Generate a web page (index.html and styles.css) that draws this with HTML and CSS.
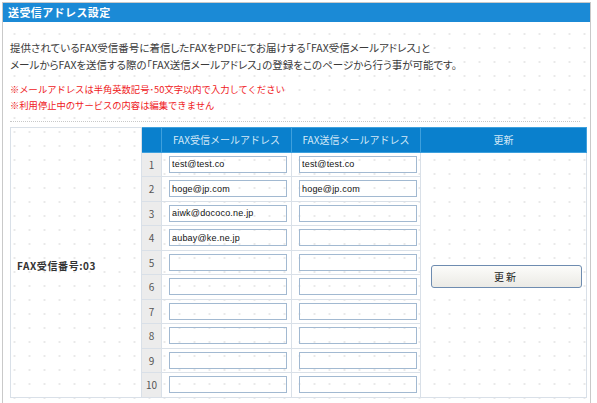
FILE: index.html
```html
<!DOCTYPE html>
<html lang="ja">
<head>
<meta charset="utf-8">
<title>送受信アドレス設定</title>
<link rel="stylesheet" href="styles.css">
</head>
<body>
<div class="panel">
  <h1 class="panel-title">送受信アドレス設定</h1>
  <div class="panel-body">
    <p class="lead">提供されているFAX受信番号に着信したFAXをPDFにてお届けする「FAX受信メールアドレス」と<br>メールからFAXを送信する際の「FAX送信メールアドレス」の登録をこのページから行う事が可能です。</p>
    <p class="notes">※メールアドレスは半角英数記号･50文字以内で入力してください<br>※利用停止中のサービスの内容は編集できません</p>
    <hr class="sep">
    <table class="addr">
      <colgroup>
        <col class="c-label"><col class="c-num"><col class="c-rx"><col class="c-tx"><col class="c-btn">
      </colgroup>
      <tbody>
        <tr class="head-row">
          <th class="label" rowspan="11">FAX受信番号:03</th>
          <th class="head"></th>
          <th class="head">FAX受信メールアドレス</th>
          <th class="head">FAX送信メールアドレス</th>
          <th class="head">更新</th>
        </tr>
        <tr><td class="num">1</td><td class="cell"><input class="field" value="test@test.co"></td><td class="cell"><input class="field" value="test@test.co"></td><td class="action" rowspan="10"><button class="btn">更新</button></td></tr>
        <tr><td class="num">2</td><td class="cell"><input class="field" value="hoge@jp.com"></td><td class="cell"><input class="field" value="hoge@jp.com"></td></tr>
        <tr><td class="num">3</td><td class="cell"><input class="field" value="aiwk@dococo.ne.jp"></td><td class="cell"><input class="field" value=""></td></tr>
        <tr><td class="num">4</td><td class="cell"><input class="field" value="aubay@ke.ne.jp"></td><td class="cell"><input class="field" value=""></td></tr>
        <tr><td class="num">5</td><td class="cell"><input class="field" value=""></td><td class="cell"><input class="field" value=""></td></tr>
        <tr><td class="num">6</td><td class="cell"><input class="field" value=""></td><td class="cell"><input class="field" value=""></td></tr>
        <tr><td class="num">7</td><td class="cell"><input class="field" value=""></td><td class="cell"><input class="field" value=""></td></tr>
        <tr><td class="num">8</td><td class="cell"><input class="field" value=""></td><td class="cell"><input class="field" value=""></td></tr>
        <tr><td class="num">9</td><td class="cell"><input class="field" value=""></td><td class="cell"><input class="field" value=""></td></tr>
        <tr><td class="num">10</td><td class="cell"><input class="field" value=""></td><td class="cell"><input class="field" value=""></td></tr>
      </tbody>
    </table>
  </div>
</div>
</body>
</html>
```
FILE: styles.css
```css
html, body {
  margin: 0;
  padding: 0;
  background: #fff;
}
body {
  font-family: "Noto Sans CJK JP", "Noto Sans", sans-serif;
  color: #333;
}
.panel {
  margin: 2px 0 0 2px;
  width: 587px;
  border: 1px solid #c9c9c9;
  border-bottom: none;
  min-height: 400px;
  background-color: #fff;
  background-image: radial-gradient(circle, #e9e9e9 0.9px, transparent 1.3px);
  background-size: 15px 14px;
  background-position: 4px 24px;
}
.panel-title {
  margin: 0;
  height: 19px;
  line-height: 19px;
  padding-left: 5px;
  background: #1b8ad6;
  color: #fff;
  font-size: 11px;
  font-weight: bold;
  letter-spacing: 0.4px;
}
.panel-body {
  padding: 17px 3px 0 7px;
}
.lead {
  margin: 0;
  font-size: 10.5px;
  line-height: 17px;
  color: #3a3a3a;
  font-feature-settings: "palt";
}
.notes {
  margin: 8px 0 0;
  font-size: 9.3px;
  line-height: 16px;
  color: #f0201c;
}
.sep {
  margin: 8px 7px 0 0;
  border: none;
  border-top: 1px dotted #c8c8c8;
  height: 0;
}
.addr {
  margin-top: 5px;
  width: 576px;
  border-collapse: collapse;
  table-layout: fixed;
  border: 1px solid #d5dde6;
}
.c-label { width: 131px; }
.c-num { width: 20px; }
.c-rx { width: 130px; }
.c-tx { width: 129px; }
.c-btn { width: 166px; }
.addr th, .addr td {
  border: 1px solid #d9e0e8;
  padding: 0;
}
.label {
  text-align: left;
  vertical-align: middle;
  padding-left: 6px !important;
  padding-top: 6px !important;
  font-size: 10px;
  font-weight: bold;
  color: #333;
  letter-spacing: 0.6px;
}
.head-row {
  height: 24px;
}
.head {
  background: #0a80cd;
  color: #d3e8f7;
  font-size: 10px;
  font-weight: normal;
  border-color: #3ea0dd !important;
}
.addr tr {
  height: 24.5px;
}
.num {
  background: #ececec;
  color: #555;
  font-size: 10px;
  text-align: center;
}
.cell {
  padding-left: 7px !important;
}
.field {
  display: block;
  box-sizing: border-box;
  width: 118px;
  height: 17px;
  margin: 0;
  padding: 0 2px;
  border: 1px solid #a2b9d1;
  background: transparent;
  font-family: "Liberation Sans", "DejaVu Sans", sans-serif;
  font-size: 9px;
  letter-spacing: 0.2px;
  color: #111;
  outline: none;
}
.action {
  text-align: center;
  vertical-align: middle;
}
.btn {
  width: 151px;
  height: 23px;
  margin-left: 5px;
  border: 1px solid #6e8cb0;
  border-radius: 3px;
  background: linear-gradient(#fcfcfa, #ebeae5);
  font-family: "Noto Sans CJK JP", sans-serif;
  font-size: 10px;
  letter-spacing: 2px;
  color: #222;
  padding: 0;
}
```
